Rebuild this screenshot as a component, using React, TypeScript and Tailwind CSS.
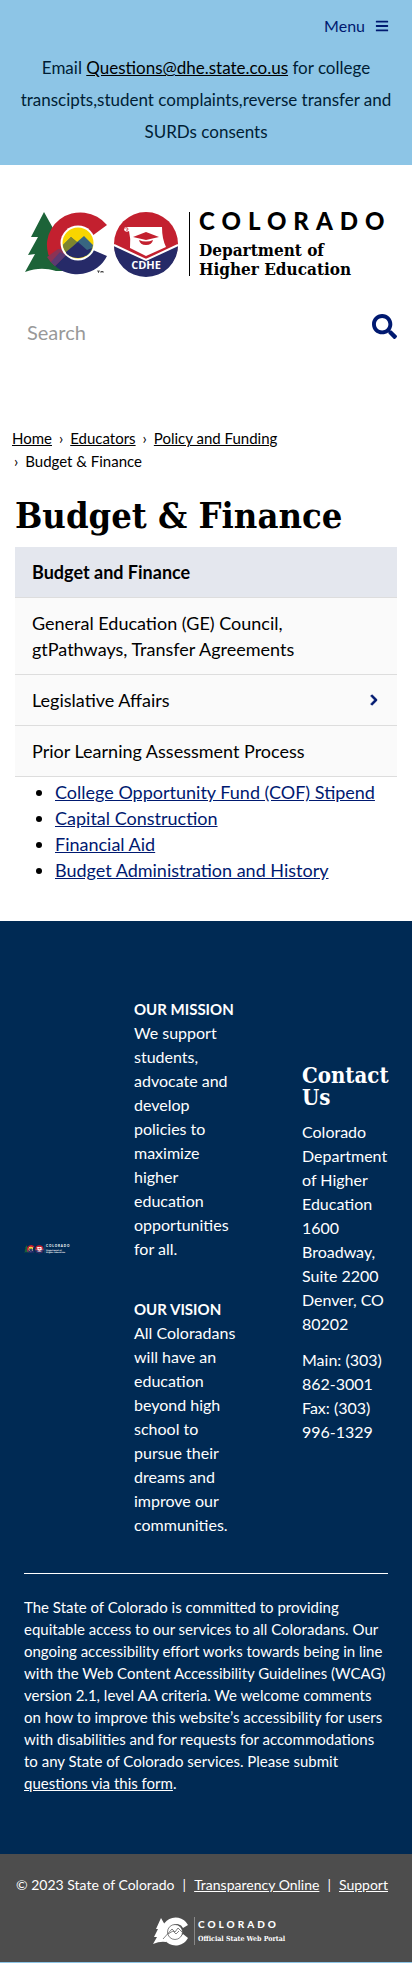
import React from 'react';
import { FaBars, FaChevronRight, FaSearch } from 'react-icons/fa';

const slab = "font-['DejaVu_Serif_Condensed','DejaVu_Serif',serif]";

function LogoMark({ light = false }: { light?: boolean }) {
  const ink = light ? '#ffffff' : '#000000';
  return (
    <svg viewBox="0 0 364 68" className="block h-auto w-full overflow-visible" role="img" aria-label="Colorado Department of Higher Education">
      <path d="M20 1 30 19 27 20 35 35 32 37 44 60H32C21 57 13 57 1 61L11 43 4 44 14 26 7 26Z" fill="#1c6338" />
      <path d="M83 14A33 32 0 1 0 30 54L42 43 54 31 68 25Z" fill="#c3202f" />
      <path d="M30 54A33 32 0 0 0 83 45L69 39 54 31 42 43Z" fill="#262a68" />
      <path d="M38 38 42 44 31 55A33 32 0 0 1 23 46L34 38Z" fill="#8b3355" />
      <path d="M36 41 42 44 31 55 27 51Z" fill="#5b3a72" />
      <circle cx="54" cy="32" r="17.5" fill="white" />
      <circle cx="54" cy="32" r="15.5" fill="#f8d500" />
      <path d="M39 34 47 26 53 31 60 25 69 34Q68 42 62 45L46 45Q40 41 39 34Z" fill="#386681" />
      <path d="M39 34 47 26 53 31 44 42Q39 38 39 34Z" fill="#7d842e" />
      <path d="M42 41 54 31 63 39 68 37A15.500 15.500 0 0 1 42 42Z" fill="#262a68" />
      <path d="M73 60h3m-1.500 0v2M77 62v-2l1 1 1-1v2" stroke={ink} strokeWidth=".6" fill="none" />
      <circle cx="122" cy="33" r="32" fill="#c3202f" />
      <path d="M90 34 122 49 154 34A32 32 0 0 1 90 34Z" fill="#262a68" />
      <path d="M90 34 122 49 154 34" stroke="white" strokeWidth="2" fill="none" />
      <path d="M101 16H138Q138 28 142 36L122 45 106 37Q107 28 105 20Q102 22 100 19Z" fill="white" />
      <path d="M101 17q3-1 3 1t-2 1" fill="none" stroke="#c3202f" strokeWidth=".8" />
      <path d="M109 26 122 21 135 26 122 29Z" fill="#c3202f" />
      <path d="M115 29Q122 32 129 29Q128 34 122 34Q116 34 115 29Z" fill="#c3202f" />
      <text x="122" y="58" textAnchor="middle" fontFamily="Open Sans, sans-serif" fontWeight="700" fontSize="11" fill="white">CDHE</text>
      <path d="M165.500 1V65" stroke={ink} />
      <text x="175" y="19" fontFamily="Lato, sans-serif" fontWeight="900" fontSize="24" letterSpacing="7" fill={ink}>COLORADO</text>
      <g fontFamily="DejaVu Serif Condensed, DejaVu Serif, serif" fontWeight="700" fontSize="17" fill={ink}>
        <text x="175" y="45">Department of</text>
        <text x="175" y="64">Higher Education</text>
      </g>
    </svg>
  );
}

function PortalLogo() {
  return (
    <svg viewBox="0 0 136 28" className="block h-7 w-34 overflow-visible" role="img" aria-label="Colorado Official State Web Portal">
      <path d="M9 1 13 8 12 9 14 12V25Q8 24 1 27L5 20 2 20 6 12 4 12Z" fill="white" />
      <path d="M36 8A14 14 0 1 0 36 21L31 17A7 7 0 1 1 31 11Z" fill="white" />
      <circle cx="23" cy="15" r="7.500" fill="white" stroke="#4d4d4d" strokeWidth=".7" />
      <path d="M11 22 20 12 23 15 26 11 30 15M16 17 21 14 24 17 27 14" fill="none" stroke="#4d4d4d" strokeWidth=".7" />
      <path d="M42.500 0V28" stroke="#888888" />
      <text x="46" y="11" fontFamily="Lato, sans-serif" fontWeight="900" fontSize="10" letterSpacing="3" fill="white">COLORADO</text>
      <text x="46" y="24" fontFamily="DejaVu Serif Condensed, DejaVu Serif, serif" fontWeight="700" fontSize="7" fill="white">Official State Web Portal</text>
    </svg>
  );
}

const rows = [
  { label: ['Budget and Finance'], active: true },
  { label: ['General Education (GE) Council,', 'gtPathways, Transfer Agreements'] },
  { label: ['Legislative Affairs'], arrow: true },
  { label: ['Prior Learning Assessment Process'] },
];

const links = ['College Opportunity Fund (COF) Stipend', 'Capital Construction', 'Financial Aid', 'Budget Administration and History'];

function Lines({ items }: { items: string[] }) {
  return (
    <>
      {items.map((t, i) => (
        <React.Fragment key={t}>
          {i > 0 && <br />}
          {t}
        </React.Fragment>
      ))}
    </>
  );
}

export default function App() {
  return (
    <div className="bg-white font-['Lato','Open_Sans',sans-serif] text-[18px] text-black">
      <header className="bg-[#8dc5e6] pb-[17px] text-[#001d35]">
        <div className="flex justify-end px-[23px] pt-[10px]">
          <button type="button" className="flex h-8 items-center gap-[10px] text-[16px] text-[#001970]">
            Menu <FaBars className="size-[14px]" />
          </button>
        </div>
        <p className="pt-[10px] text-center text-[17px] leading-8 whitespace-nowrap">
          Email <a href="mailto:Questions@dhe.state.co.us" className="text-black underline">Questions@dhe.state.co.us</a> for college
          <br />transcipts,student complaints,reverse transfer and
          <br />SURDs consents
        </p>
      </header>

      <a href="#home" className="mx-6 mt-[46px] block">
        <LogoMark />
      </a>
      <form role="search" className="mt-[35px] flex h-9 justify-between pr-[15px] pl-[27px]" onSubmit={(e) => e.preventDefault()}>
        <input aria-label="Search" placeholder="Search" className="min-w-0 flex-1 text-xl outline-none placeholder:text-[#999999]" />
        <button type="submit" aria-label="Submit search" className="self-start text-[#001970]">
          <FaSearch className="size-[25px]" />
        </button>
      </form>

      <nav aria-label="Breadcrumb" className="mt-[77px] px-3 text-[15px] leading-[23px]">
        <a href="#home" className="underline">Home</a><span className="px-[7px]">›</span>
        <a href="#educators" className="underline">Educators</a><span className="px-[7px]">›</span>
        <a href="#policy" className="underline">Policy and Funding</a>
        <br />
        <span className="pr-[7px] pl-[2px]">›</span>Budget &amp; Finance
      </nav>

      <main className="px-[15px] pb-[38px]">
        <h1 className={`${slab} mt-5 text-[36px] leading-[44px] font-bold whitespace-nowrap`}>Budget &amp; Finance</h1>
        <nav aria-label="Section" className="mt-[10px]">
          {rows.map((r) => (
            <a
              key={r.label[0]}
              href="#section"
              className={
                r.active
                  ? 'flex items-center justify-between border-b border-[#dddddd] bg-[#e4e7ee] px-[17px] py-3 leading-[26px] font-bold'
                  : 'flex items-center justify-between border-b border-[#dddddd] bg-[#fafafa] px-[17px] py-3 leading-[26px]'
              }
            >
              <span><Lines items={r.label} /></span>
              {r.arrow && <FaChevronRight className="size-3 text-[#001970]" stroke="currentColor" strokeWidth="40" />}
            </a>
          ))}
        </nav>
        <ul className="list-disc pt-[2px] pl-10 leading-[26px]">
          {links.map((l) => (
            <li key={l}><a href="#link" className="text-[#001970] underline">{l}</a></li>
          ))}
        </ul>
      </main>

      <footer>
        <div className="bg-[#002a54] px-6 pt-[76px] pb-[60px] text-white">
          <div className="flex border-b border-white pb-[36px] text-[16px] leading-6">
            <div className="mt-[248px] w-[46px] shrink-0">
              <LogoMark light />
            </div>
            <div className="ml-16 w-[110px] shrink-0 whitespace-nowrap">
              <p className="mb-9">
                <strong className="text-[15px]">OUR MISSION</strong><br />
                <Lines items={['We support', 'students,', 'advocate and', 'develop', 'policies to', 'maximize', 'higher', 'education', 'opportunities', 'for all.']} />
              </p>
              <p>
                <strong className="text-[15px]">OUR VISION</strong><br />
                <Lines items={['All Coloradans', 'will have an', 'education', 'beyond high', 'school to', 'pursue their', 'dreams and', 'improve our', 'communities.']} />
              </p>
            </div>
            <div className="mt-[67px] ml-[58px] whitespace-nowrap">
              <h2 className={`${slab} mb-3 text-[22px] leading-[22px] font-bold`}>Contact<br />Us</h2>
              <p className="mb-3"><Lines items={['Colorado', 'Department', 'of Higher', 'Education', '1600', 'Broadway,', 'Suite 2200', 'Denver, CO', '80202']} /></p>
              <p><Lines items={['Main: (303)', '862-3001', 'Fax: (303)', '996-1329']} /></p>
            </div>
          </div>
          <p className="pt-[22px] text-[15px] leading-[22px] whitespace-nowrap">
            <Lines items={['The State of Colorado is committed to providing', 'equitable access to our services to all Coloradans. Our', 'ongoing accessibility effort works towards being in line', 'with the Web Content Accessibility Guidelines (WCAG)', 'version 2.1, level AA criteria. We welcome comments', 'on how to improve this website’s accessibility for users', 'with disabilities and for requests for accommodations', 'to any State of Colorado services. Please submit']} />
            <br /><a href="#form" className="underline">questions via this form</a>.
          </p>
        </div>
        <div className="border-b border-[#8dc5e6] bg-[#4d4d4d] pt-[19px] pr-6 pb-[17px] pl-4 text-[14px] leading-6 text-white">
          <div className="flex justify-between whitespace-nowrap">
            <span>© 2023 State of Colorado</span><span>|</span>
            <a href="#transparency" className="underline">Transparency Online</a><span>|</span>
            <a href="#support" className="underline">Support</a>
          </div>
          <div className="mt-[20px] flex justify-center pl-9">
            <PortalLogo />
          </div>
        </div>
      </footer>
    </div>
  );
}
